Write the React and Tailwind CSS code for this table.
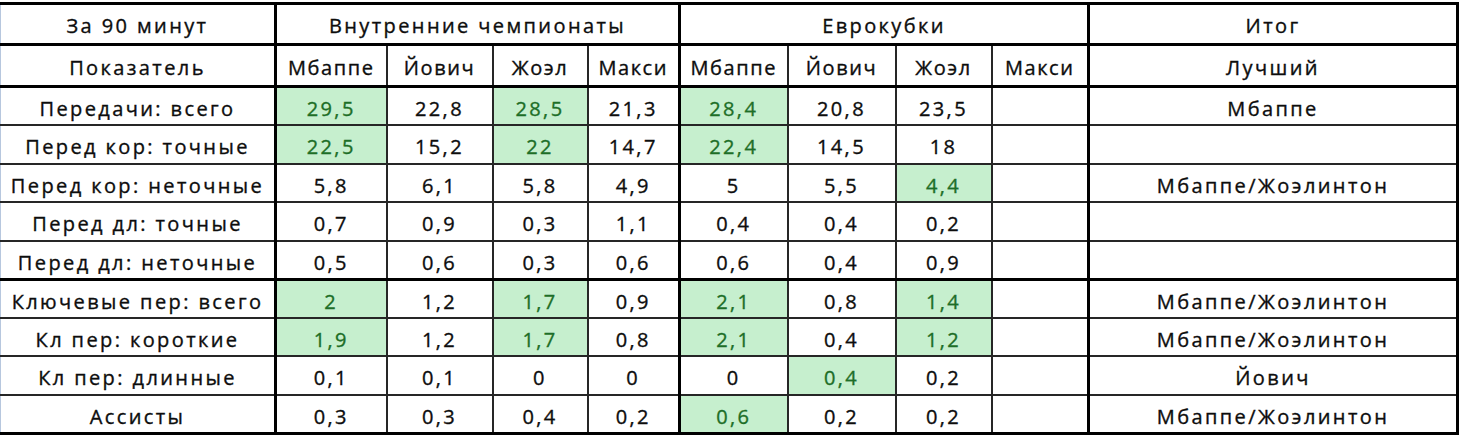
import React from 'react'

const players = ['Мбаппе', 'Йович', 'Жоэл', 'Макси']

// g = green highlight (Excel "Good" style)
const rows = [
  { name: 'Передачи: всего', dom: ['29,5', '22,8', '28,5', '21,3'], euro: ['28,4', '20,8', '23,5', ''], g: [0, 2, 4], best: 'Мбаппе' },
  { name: 'Перед кор: точные', dom: ['22,5', '15,2', '22', '14,7'], euro: ['22,4', '14,5', '18', ''], g: [0, 2, 4], best: '' },
  { name: 'Перед кор: неточные', dom: ['5,8', '6,1', '5,8', '4,9'], euro: ['5', '5,5', '4,4', ''], g: [6], best: 'Мбаппе/Жоэлинтон' },
  { name: 'Перед дл: точные', dom: ['0,7', '0,9', '0,3', '1,1'], euro: ['0,4', '0,4', '0,2', ''], g: [], best: '' },
  { name: 'Перед дл: неточные', dom: ['0,5', '0,6', '0,3', '0,6'], euro: ['0,6', '0,4', '0,9', ''], g: [], best: '' },
  { name: 'Ключевые пер: всего', dom: ['2', '1,2', '1,7', '0,9'], euro: ['2,1', '0,8', '1,4', ''], g: [0, 2, 4, 6], best: 'Мбаппе/Жоэлинтон', thickTop: true },
  { name: 'Кл пер: короткие', dom: ['1,9', '1,2', '1,7', '0,8'], euro: ['2,1', '0,4', '1,2', ''], g: [0, 2, 4, 6], best: 'Мбаппе/Жоэлинтон' },
  { name: 'Кл пер: длинные', dom: ['0,1', '0,1', '0', '0'], euro: ['0', '0,4', '0,2', ''], g: [5], best: 'Йович' },
  { name: 'Ассисты', dom: ['0,3', '0,3', '0,4', '0,2'], euro: ['0,6', '0,2', '0,2', ''], g: [4], best: 'Мбаппе/Жоэлинтон' },
]

const App = () => {
  return (
    <div className='w-[1460px] h-[436px] bg-white pt-[2px] overflow-hidden' style={{ fontFamily: '"Open Sans", "Liberation Sans", sans-serif' }}>
      <table className='table-fixed border-collapse text-[20px] tracking-[2.4px] font-medium text-[#0d0d0d] [-webkit-text-stroke:0.35px] w-[1457px]'>
        <colgroup>
          <col className='w-[275px]' />
          <col className='w-[111px]' />
          <col className='w-[106px]' />
          <col className='w-[95px]' />
          <col className='w-[92px]' />
          <col className='w-[108px]' />
          <col className='w-[108px]' />
          <col className='w-[96px]' />
          <col className='w-[97px]' />
          <col className='w-[369px]' />
        </colgroup>
        <thead>
          <tr className='h-[41px]'>
            <th className='font-medium text-center border-t-[3px] border-b-[3px] border-r-[3px] border-black border-l border-l-[#b7c7de] pt-1'>За 90 минут</th>
            <th colSpan={4} className='font-medium text-center border-[3px] border-black pt-1'>Внутренние чемпионаты</th>
            <th colSpan={4} className='font-medium text-center border-[3px] border-black pt-1'>Еврокубки</th>
            <th className='font-medium text-center border-[3px] border-black pt-1'>Итог</th>
          </tr>
          <tr className='h-[42px]'>
            <th className='font-medium text-center border-b-[3px] border-r-[3px] border-black border-l border-l-[#b7c7de] pt-1'>Показатель</th>
            {players.map((p, i) => (
              <th key={'d' + i} className={'font-medium text-center whitespace-nowrap tracking-[1.6px] border-b-[3px] pt-1 ' + (i === 3 ? 'border-r-[3px] border-black' : 'border-r-2 border-b-black border-r-[#262626]')}>{p}</th>
            ))}
            {players.map((p, i) => (
              <th key={'e' + i} className={'font-medium text-center whitespace-nowrap tracking-[1.6px] border-b-[3px] pt-1 ' + (i === 3 ? 'border-r-[3px] border-black' : 'border-r-2 border-b-black border-r-[#262626]')}>{p}</th>
            ))}
            <th className='font-medium text-center border-b-[3px] border-r-[3px] border-black pt-1'>Лучший</th>
          </tr>
        </thead>
        <tbody>
          {rows.map((r, ri) => {
            const vals = [...r.dom, ...r.euro]
            const last = ri === rows.length - 1
            const rowB = (r.thickTop ? 'border-t-[3px] border-t-black ' : 'border-t-2 border-t-[#262626] ') + (last ? 'border-b-[3px] border-b-black ' : 'border-b-2 border-b-[#262626] ')
            return (
              <tr key={ri} className='h-[38.5px]'>
                <td className={'text-center border-r-[3px] border-r-black border-l border-l-[#b7c7de] pt-1.5 whitespace-nowrap ' + rowB}>{r.name}</td>
                {vals.map((v, ci) => {
                  const green = r.g.includes(ci)
                  return (
                    <td
                      key={ci}
                      className={'text-center pt-1.5 ' + rowB + (ci === 3 || ci === 7 ? 'border-r-[3px] border-r-black ' : 'border-r-2 border-r-[#262626] ') + (green ? 'bg-[#c6efce] text-[#1d6e27]' : '')}
                    >
                      {v}
                    </td>
                  )
                })}
                <td className={'text-center border-r-[3px] border-r-black pt-1.5 ' + rowB}>{r.best}</td>
              </tr>
            )
          })}
        </tbody>
      </table>
    </div>
  )
}

export default App
